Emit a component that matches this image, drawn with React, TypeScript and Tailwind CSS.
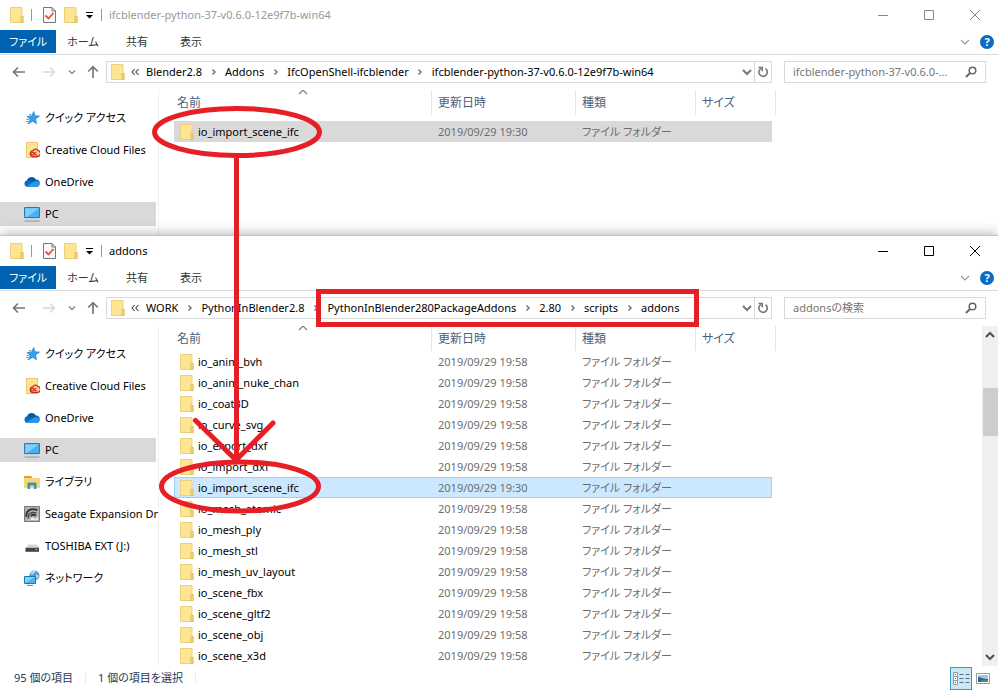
import { clsx } from "clsx"
import type { ReactNode } from "react"

type Row = { name: string; date: string; selected?: boolean }

type ExplorerProps = {
  title: string
  path: string[]
  search: string
  nav: string[]
  rows: Row[]
  active?: boolean
}

const navTop = ["クイック アクセス", "Creative Cloud Files", "OneDrive", "PC"]
const navAll = [...navTop, "ライブラリ", "Seagate Expansion Dr", "TOSHIBA EXT (J:)", "ネットワーク"]

const addonRows: Row[] = [
  "io_anim_bvh",
  "io_anim_nuke_chan",
  "io_coat3D",
  "io_curve_svg",
  "io_export_dxf",
  "io_import_dxf",
  "io_import_scene_ifc",
  "io_mesh_atomic",
  "io_mesh_ply",
  "io_mesh_stl",
  "io_mesh_uv_layout",
  "io_scene_fbx",
  "io_scene_gltf2",
  "io_scene_obj",
  "io_scene_x3d",
].map((name) => {
  const selected = name === "io_import_scene_ifc"
  return { name, date: selected ? "2019/09/29 19:30" : "2019/09/29 19:58", selected }
})

function Folder() {
  return (
    <svg width="14" height="16" viewBox="0 0 14 16" className="shrink-0" aria-hidden="true">
      <path d="M.5.5h11.500v9h1v6H.5z" fill="#fde592" stroke="#ecd07c" />
      <path d="M11 15.500V9.500h2v6z" fill="#fbe08a" stroke="#dfbb55" />
    </svg>
  )
}

function Chevron({ d, color = "#666", width = 1.5 }: { d: string; color?: string; width?: number }) {
  return (
    <svg width="12" height="12" viewBox="0 0 12 12" fill="none" stroke={color} strokeWidth={width} aria-hidden="true">
      <path d={d} />
    </svg>
  )
}

const DOWN = "M2 4l4 4 4-4"
const UP = "M2 8l4-4 4 4"
const RIGHT = "M4.500 3.500L7 6 4.500 8.500"

function NavIcon({ name }: { name: string }) {
  let art: ReactNode = null
  if (name.startsWith("クイック")) {
    art = (
      <>
        <path d="M9.800 1.500l1 4.300 4.700.3-4 2.900 1 4.700-3.800-2.500-4.200 2.600 1.700-4.600L2.800 6.500l4.700-.6z" fill="#35a2e8" stroke="#1c7fcb" strokeWidth=".7" />
        <path d="M5 4.500h2M2.500 9.500H5M2 11.500h2.500M3.500 13.500H5" stroke="#3d94d4" strokeWidth=".9" />
      </>
    )
  } else if (name.startsWith("Creative")) {
    art = (
      <>
        <path d="M2.500.5h11v15h-11z" fill="#fde592" stroke="#ecca6a" />
        <path d="M8.800 8.800a3.200 3.200 0 0 1 5.400-.2 3 3 0 0 1-.7 5.900H8.500a2.900 2.900 0 0 1 .3-5.700z" fill="#f7c9a0" stroke="#d42a1c" strokeWidth="1.300" />
        <path d="M13 12.700c-2.500.8-2.800-2.700-5-2.200a1.200 1.200 0 0 0 .3 2.500c1.800 0 2.300-2.800 4-2.800" fill="none" stroke="#d42a1c" strokeWidth="1.200" />
      </>
    )
  } else if (name === "OneDrive") {
    art = (
      <>
        <path d="M3.500 13a3.400 3.400 0 0 1-.4-6.700A5 5 0 0 1 11.800 5.500 3.800 3.800 0 0 1 12.800 13z" fill="#0f6cbd" />
        <path d="M2 12.700L10 7.500l3-.1a2.900 2.900 0 0 1-.2 5.600H3.500z" fill="#2a97e6" />
        <path d="M3.100 6.300A5 5 0 0 1 11.800 5.500L9.500 8z" fill="#0a57a6" />
      </>
    )
  } else if (name === "PC") {
    art = (
      <>
        <path d="M.6 1.600h14.800v10H.6z" fill="#48b1f5" stroke="#2b6f9f" />
        <path d="M1.200 2.200h13.600L3 11H1.200z" fill="#82cdfb" />
        <path d="M5.500 12h5v1h-5z" fill="#c3ccd6" />
        <path d="M.5 15h15" stroke="#8899ad" />
      </>
    )
  } else if (name === "ライブラリ") {
    art = (
      <>
        <path d="M0 2h7l1.500 2H0z" fill="#d9a326" />
        <path d="M0 4h16v10H0z" fill="#f8d776" />
        <path d="M3.500 15V8.500h9V15H10v-3.500H6V15z" fill="#3e93b8" />
      </>
    )
  } else if (name.startsWith("Seagate")) {
    art = (
      <>
        <path d="M.5.5h15v15H.5z" fill="#b5b5b5" stroke="#777" />
        <path d="M2.500 11C1.500 5 6 1.500 13.500 4" fill="none" stroke="#3a3a3a" strokeWidth="2" />
        <path d="M4.500 12.500c-1-4.500 2-7 8-5.500" fill="none" stroke="#4a4a4a" strokeWidth="1.500" />
        <path d="M7 10.500c.5-2 3.500-2.500 5-.5" fill="none" stroke="#333" strokeWidth="2" />
        <path d="M6 14l2-3 3 2 3-2v3z" fill="#ececec" />
      </>
    )
  } else if (name.startsWith("TOSHIBA")) {
    art = (
      <>
        <path d="M4 6.500h9l2 3.500H2z" fill="#d5d5d5" />
        <path d="M1.500 9.800H15v4H1.500z" fill="#444" />
        <path d="M11.500 11.500h1.800" stroke="#5be35b" strokeWidth="1.200" />
      </>
    )
  } else {
    art = (
      <>
        <circle cx="10.500" cy="5.500" r="5" fill="#4f9fd0" />
        <path d="M6.500 3.500c2-2.500 4.500-3 6-2.500-1.500 1.500-3.500 2-4 4zM12 4l3 2-2.500 3z" fill="#b9dff2" />
        <path d="M.5 6.500h11v7H.5z" fill="#48b1f5" stroke="#2176b0" />
        <path d="M1 7h10L2 12.500H1z" fill="#86d0fb" />
        <path d="M3 15.400h6" stroke="#5a87a8" />
      </>
    )
  }
  return (
    <svg width="16" height="16" viewBox="0 0 16 16" className="shrink-0" aria-hidden="true">
      {art}
    </svg>
  )
}

function TitleBar({ title, active }: { title: string; active?: boolean }) {
  return (
    <header className="flex h-[30px] items-center">
      <div className="flex items-center pl-[10px]">
        <Folder />
        <span className="mx-[7px] h-3 w-px bg-[#999]" />
        <button aria-label="プロパティ" className="ml-1">
          <svg width="13" height="16" viewBox="0 0 13 16" fill="none">
            <path d="M.5.5h8.500l3.500 3.500v11.500H.5z" fill="#f8f8f8" stroke="#777" />
            <path d="M9 .5V4h3.500" stroke="#777" />
            <path d="M2.500 8.500l3 3 5-5.500" stroke="#e0552b" strokeWidth="1.800" />
          </svg>
        </button>
        <button aria-label="新しいフォルダー" className="ml-2">
          <Folder />
        </button>
        <button aria-label="クイック アクセス ツール バーのカスタマイズ" className="ml-[7px]">
          <svg width="9" height="10" viewBox="0 0 9 10">
            <path d="M1 2.500h7" stroke="#000" />
            <path d="M1 5h7L4.500 8.500z" />
          </svg>
        </button>
        <span className="mx-[7px] h-3 w-px bg-[#999]" />
      </div>
      <h1 className={active ? "text-black" : "text-[#999]"}>{title}</h1>
      <div className={clsx("ml-auto flex", active ? "text-black" : "text-[#888]")}>
        {[
          ["最小化", "M0 5.500h10"],
          ["最大化", "M.5.5h9v9h-9z"],
          ["閉じる", "M0 0l10 10M10 0L0 10"],
        ].map(([label, d]) => (
          <button key={label} aria-label={label} className="flex h-[30px] w-[46px] items-center justify-center">
            <svg width="10" height="10" viewBox="0 0 10 10" fill="none" stroke="currentColor">
              <path d={d} />
            </svg>
          </button>
        ))}
      </div>
    </header>
  )
}

function Ribbon() {
  return (
    <div className="flex h-[25px] border-b border-[#dadbdc]">
      <button className="h-[23px] w-14 bg-[#0063b1] text-white">ファイル</button>
      {["ホーム", "共有", "表示"].map((tab) => (
        <button key={tab} className="h-[23px] w-[54px] text-[#333]">
          {tab}
        </button>
      ))}
      <div className="ml-auto flex items-center gap-[9px] pr-1">
        <button aria-label="リボンの展開">
          <Chevron d={DOWN} color="#999" width={1.2} />
        </button>
        <button aria-label="ヘルプ" className="size-[14px] rounded-full bg-[#0a6ac4] text-[11px] leading-[14px] font-bold text-white">
          ?
        </button>
      </div>
    </div>
  )
}

function AddressBar({ path, search }: { path: string[]; search: string }) {
  return (
    <div className="flex h-[35px] items-start pt-[6px]">
      <div className="flex h-[22px] w-[106px] shrink-0 items-center pl-3">
        <button aria-label="戻る">
          <svg width="14" height="12" viewBox="0 0 14 12" fill="none" stroke="#777" strokeWidth="1.700">
            <path d="M13 6H1.500M6 1.500L1.500 6 6 10.500" />
          </svg>
        </button>
        <button aria-label="進む" className="ml-4">
          <svg width="14" height="12" viewBox="0 0 14 12" fill="none" stroke="#d8d8d8" strokeWidth="1.400">
            <path d="M1 6h11.500M8 1.500L12.500 6 8 10.500" />
          </svg>
        </button>
        <button aria-label="最近表示した場所" className="ml-[10px]">
          <svg width="12" height="12" viewBox="0 0 12 12" fill="none" stroke="#888" strokeWidth="1.400">
            <path d="M3 4.500l3 3 3-3" />
          </svg>
        </button>
        <button aria-label="上へ" className="ml-[9px]">
          <svg width="12" height="14" viewBox="0 0 12 14" fill="none" stroke="#777" strokeWidth="1.700">
            <path d="M6 13V2M1.200 6.500L6 1.700l4.800 4.800" />
          </svg>
        </button>
      </div>
      <div className="flex h-[22px] min-w-0 flex-1 items-center border border-[#d9d9d9] pl-1">
        <Folder />
        <nav className="flex min-w-0 flex-1 items-center pl-[6px] whitespace-nowrap">
          <svg width="8" height="8" viewBox="0 0 8 8" fill="none" stroke="#444" strokeWidth="1.100" className="mr-[7px]" aria-hidden="true">
            <path d="M3.700 1L1 4l2.700 3M7.500 1L4.800 4l2.700 3" />
          </svg>
          {path.map((part, i) => (
            <span key={part} className="flex items-center">
              {i > 0 && (
                <span className="flex w-[23px] justify-center">
                  <Chevron d={RIGHT} color="#777" />
                </span>
              )}
              <a href="#" className="text-black">
                {part}
              </a>
            </span>
          ))}
        </nav>
        <button aria-label="以前の場所" className="mr-px">
          <Chevron d="M2 4l4 4 4-4" color="#777" width={2} />
        </button>
        <button aria-label="最新の情報に更新" className="flex h-full w-[17px] items-center justify-center border-l border-[#d9d9d9]">
          <svg width="12" height="12" viewBox="0 0 12 12" fill="none" stroke="#777" strokeWidth="1.600">
            <path d="M8.500 2.700A4.200 4.200 0 1 1 3.800 2.600" />
            <path d="M1.500 1.500h3.700v3.700" />
          </svg>
        </button>
      </div>
      <label className="mr-3 ml-3 flex h-[22px] w-[202px] shrink-0 items-center border border-[#d9d9d9] pr-2 pl-2">
        <input type="text" aria-label={search} placeholder={search} className="min-w-0 flex-1 text-ellipsis outline-none placeholder:text-[#767676]" />
        <svg width="12" height="12" viewBox="0 0 12 12" fill="none" stroke="#666" className="ml-2 shrink-0" aria-hidden="true">
          <circle cx="7.500" cy="4.500" r="3.300" strokeWidth="1.500" />
          <path d="M5 7L1 11" strokeWidth="2" />
        </svg>
      </label>
    </div>
  )
}

function FileTable({ rows, active }: { rows: Row[]; active?: boolean }) {
  const tint = active ? "border-y border-[#99d1ff] bg-[#cce8ff]" : "bg-[#d9d9d9]"
  return (
    <table className="w-[602px] table-fixed border-separate border-spacing-0 text-left">
      <colgroup>
        <col className="w-[258px]" />
        <col className="w-[144px]" />
        <col className="w-[120px]" />
        <col className="w-[80px]" />
      </colgroup>
      <thead>
        <tr>
          {["名前", "更新日時", "種類", "サイズ"].map((label, i) => (
            <th key={label} className={clsx("p-0 text-[12px] font-normal text-[#4c607a]", !active && "pb-[6px]")}>
              <div className={clsx("relative flex h-[25px] items-center border-r border-[#e5e5e5]", i === 0 ? "pl-[3px]" : "pl-[6px]")}>
                {label}
                {i === 0 && (
                  <span className="absolute -top-1 left-1/2 -translate-x-1/2">
                    <Chevron d={UP} color="#777" width={1.1} />
                  </span>
                )}
              </div>
            </th>
          ))}
        </tr>
      </thead>
      <tbody>
        {rows.map((row) => (
          <tr key={row.name} className="h-[21px]">
            <td className={clsx("p-0", row.selected && tint, row.selected && active && "border-l")}>
              <div className={clsx("flex items-center gap-1 text-black", row.selected && active ? "pl-[5px]" : "pl-[6px]")}>
                <Folder />
                {row.name}
              </div>
            </td>
            <td className={clsx("p-0 pl-[6px] text-[#6d6d6d]", row.selected && tint)}>{row.date}</td>
            <td className={clsx("p-0 pl-[6px] whitespace-nowrap text-[#6d6d6d]", row.selected && tint)}>ファイル フォルダー</td>
            <td className="p-0 pr-1">
              {row.selected && <div className={clsx("h-[21px]", tint, active && "border-r")} />}
            </td>
          </tr>
        ))}
      </tbody>
    </table>
  )
}

function Explorer({ title, path, search, nav, rows, active }: ExplorerProps) {
  return (
    <section className={clsx("bg-white", active && "relative border-t border-[#c4c4c4] shadow-[0_0_12px_rgba(0,0,0,0.35)]")}>
      <TitleBar title={title} active={active} />
      <Ribbon />
      <AddressBar path={path} search={search} />
      <div className="flex">
        <nav className={clsx("w-[159px] shrink-0 border-r border-[#f0f0f0] pt-3", !active && "pb-[5px]")}>
          <ul>
            {nav.map((name) => (
              <li key={name} className="flex h-8 items-center">
                <a
                  href="#"
                  className={clsx(
                    "flex h-6 w-[156px] items-center gap-[5px] pl-6 whitespace-nowrap text-black",
                    name === "PC" && "bg-[#d9d9d9]",
                  )}
                >
                  <NavIcon name={name} />
                  {name}
                </a>
              </li>
            ))}
          </ul>
        </nav>
        <div className="min-w-0 flex-1 overflow-hidden pl-[15px]">
          <FileTable rows={rows} active={active} />
        </div>
        {active && (
          <div className="flex w-4 flex-col items-center bg-[#f0f0f0] py-[3px]">
            <button aria-label="上へスクロール">
              <Chevron d={UP} color="#505050" width={2} />
            </button>
            <div className="mt-[47px] h-12 w-[15px] bg-[#cdcdcd]" />
            <button aria-label="下へスクロール" className="mt-auto">
              <Chevron d={DOWN} color="#505050" width={2} />
            </button>
          </div>
        )}
      </div>
      {active && (
        <footer className="flex h-6 items-center pl-[14px] text-[#1e395b]">
          <span>95 個の項目</span>
          <span className="mx-3 h-3 w-px bg-[#ececec]" />
          <span>1 個の項目を選択</span>
          <span className="mx-3 h-3 w-px bg-[#ececec]" />
          <div className="ml-auto flex items-center gap-1 pr-2">
            <button aria-label="詳細" className="flex h-[23px] w-[22px] items-center justify-center border border-[#3a97bd] bg-[#cbe8f6]">
              <svg width="17" height="13" viewBox="0 0 17 13" fill="none">
                <path d="M.5.5h4v12h-4zM.5 4.500h4M.5 8.500h4" fill="#fff" stroke="#999" />
                <path d="M2 2.500h1M2 6.500h1M2 10.500h1" stroke="#555" />
                <path d="M6.500 2.500h4M12.500 2.500h4M6.500 6.500h4M12.500 6.500h4M6.500 10.500h4M12.500 10.500h4" stroke="#5f6f7c" />
              </svg>
            </button>
            <button aria-label="大アイコン">
              <svg width="14" height="11" viewBox="0 0 14 11">
                <path d="M.5.5h13v10H.5z" fill="#fff" stroke="#999" />
                <path d="M2 2h10v7H2z" fill="#9cc8ea" />
                <path d="M2 4c3 0 4 2 10 2v3H2z" fill="#2f6296" />
                <path d="M5 7.500l7-.5v2H4z" fill="#5d8c5a" />
              </svg>
            </button>
          </div>
        </footer>
      )}
    </section>
  )
}

export default function App() {
  return (
    <main className="relative overflow-hidden bg-white font-['Noto_Sans','Noto_Sans_CJK_JP',sans-serif] text-[11px] leading-4 [font-feature-settings:'palt']">
      <Explorer
        title="ifcblender-python-37-v0.6.0-12e9f7b-win64"
        path={["Blender2.8", "Addons", "IfcOpenShell-ifcblender", "ifcblender-python-37-v0.6.0-12e9f7b-win64"]}
        search="ifcblender-python-37-v0.6.0-..."
        nav={navTop}
        rows={[{ name: "io_import_scene_ifc", date: "2019/09/29 19:30", selected: true }]}
      />
      <Explorer
        title="addons"
        path={["WORK", "PythonInBlender2.8", "PythonInBlender280PackageAddons", "2.80", "scripts", "addons"]}
        search="addonsの検索"
        nav={navAll}
        rows={addonRows}
        active
      />
      {/* Red markup: source folder, arrow, destination */}
      <svg
        width="998"
        height="690"
        viewBox="0 0 998 690"
        fill="none"
        stroke="#e61e26"
        strokeWidth="5"
        className="pointer-events-none absolute top-0 left-0"
        aria-hidden="true"
      >
        <ellipse cx="237" cy="132" rx="82.500" ry="23.500" />
        <path d="M236.500 156V459" />
        <path d="M195.500 420.500L236 460l37-37" strokeLinecap="round" />
        <ellipse cx="240" cy="486.500" rx="78.500" ry="24.500" />
        <path d="M318.500 291.500h378v33h-378z" />
      </svg>
    </main>
  )
}
